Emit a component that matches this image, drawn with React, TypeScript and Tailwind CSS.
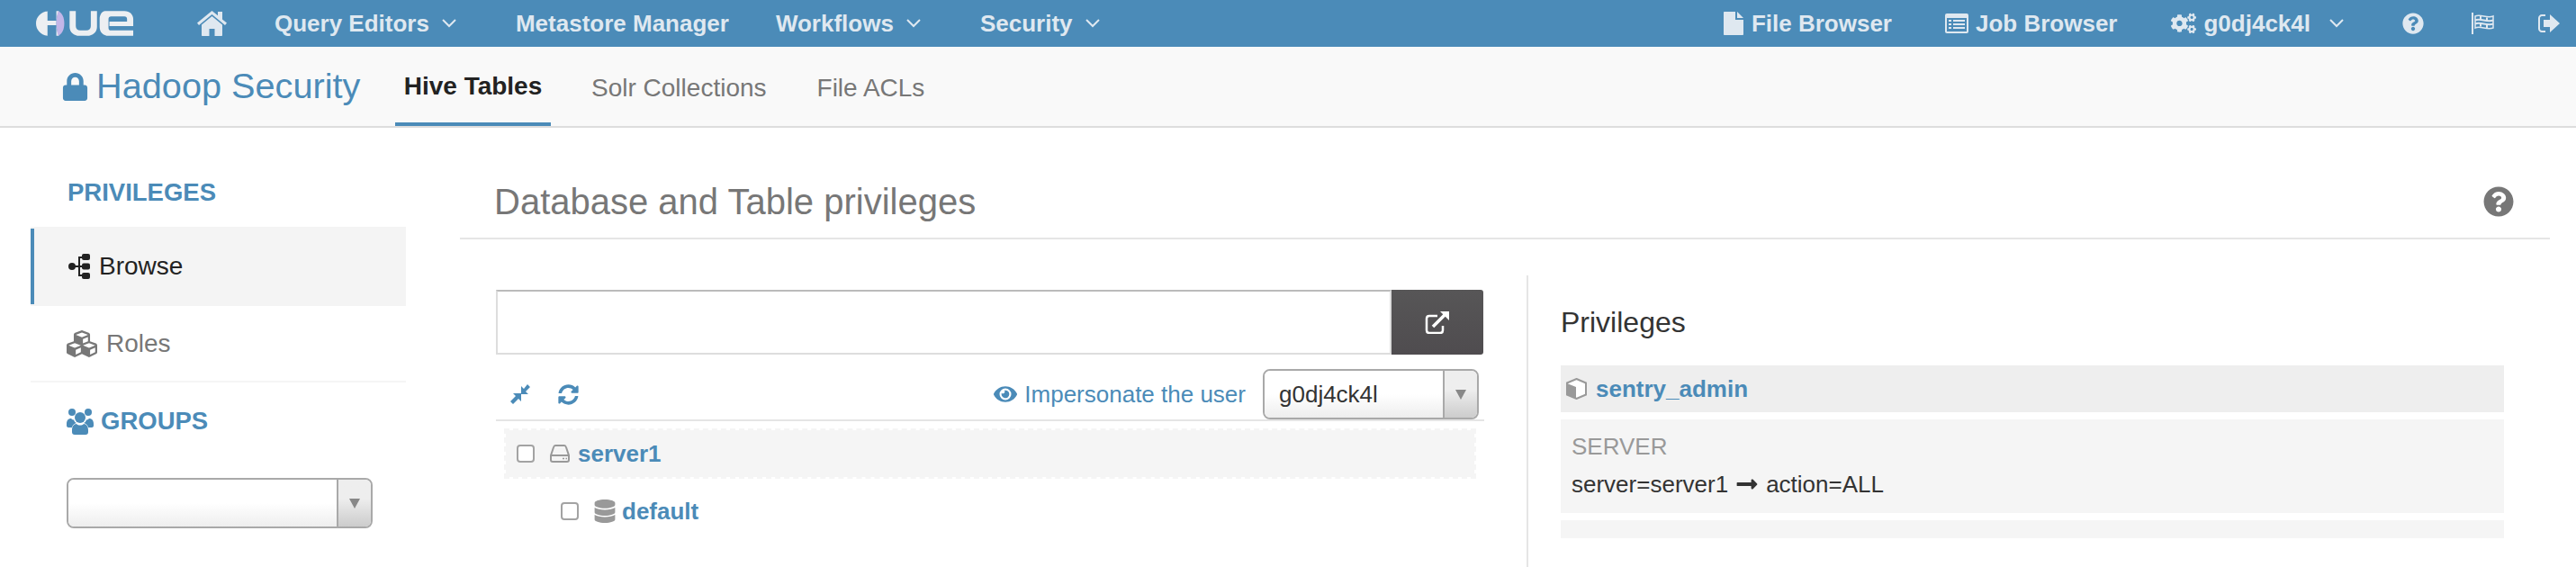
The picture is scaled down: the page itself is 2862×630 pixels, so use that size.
import React from 'react';
import { FaLock, FaCogs, FaQuestionCircle, FaCubes, FaSyncAlt, FaEye, FaDatabase, FaLongArrowAltRight } from 'react-icons/fa';

const blue = 'text-[#4b8bb8]';

const Chevron = ({ className = '' }: { className?: string }) => (
  <svg width="16" height="10" viewBox="0 0 16 10" className={className} fill="none" stroke="currentColor" strokeWidth="2">
    <path d="M1 1l7 7 7-7" />
  </svg>
);

const HueLogo = () => (
  <svg width="110" height="28" viewBox="0 0 112 28" className="mr-[69px]">
    <path d="M14 0C5 1 0 7 0 14s5 13 13 14V16h10v12h3c-2-4-3-9-3-14s1-10 3-14h-3v11H13V0z" fill="#eceff2" />
    <path d="M25 0c5 2 7 8 7 14s-2 12-7 14c-1-4-2-9-2-14s1-10 2-14z" fill="#c3b6e8" />
    <path d="M38 0h7v17c0 3 2 5 5 5h7c3 0 5-2 5-5V0h7v18c0 6-5 10-11 10h-9c-6 0-11-4-11-10z" fill="#eceff2" />
    <path d="M78 0h22c6 0 10 4 10 9v8H83v-5h20V9c0-2-1-3-3-3H85c-2 0-3 1-3 3v10c0 2 1 3 3 3h25v6H82c-6 0-10-4-10-10V9c0-5 3-9 6-9z" fill="#eceff2" />
  </svg>
);

const HomeIcon = () => (
  <svg width="33" height="28" viewBox="0 0 33 28" className="mr-[53px]" fill="#dfe8f0">
    <path d="M16.5 6L5 15.5V27c0 .6.4 1 1 1h7.5v-8h6v8H27c.6 0 1-.4 1-1V15.5z" />
    <path d="M16.5 0L0 13.5l2 2.4L16.5 4 31 15.9l2-2.4-5-4.1V1h-5v4.3z" />
  </svg>
);

const NavItem = ({ label, caret, className = '' }: { label: string; caret?: boolean; className?: string }) => (
  <span className={`flex items-center font-bold ${className}`}>
    {label}
    {caret && <Chevron className="ml-[14px]" />}
  </span>
);

const FileIcon = () => (
  <svg width="23" height="26" viewBox="0 0 23 26" className="mr-[8px]" fill="#dfe8f0">
    <path d="M1 0h12v9h9v16c0 .6-.4 1-1 1H1c-.6 0-1-.4-1-1V1c0-.6.4-1 1-1z" />
    <path d="M15 0l7 7h-7z" />
  </svg>
);

const JobIcon = () => (
  <svg width="26" height="22" viewBox="0 0 26 22" className="mr-[8px]">
    <rect width="26" height="22" rx="2" fill="#dfe8f0" />
    <path d="M2 5h22v15H2z" fill="#4b8bb8" />
    <path d="M4 7h3v2H4zM9 7h13v2H9zM4 11h3v2H4zM9 11h13v2H9zM4 15h3v2H4zM9 15h13v2H9z" fill="#dfe8f0" />
  </svg>
);

const FlagIcon = () => (
  <svg width="26" height="24" viewBox="0 0 26 24" className="mr-[49px]" fill="none" stroke="#dfe8f0">
    <path d="M2 0v24" strokeWidth="2" />
    <path d="M5 4c6-3 13 3 20 0v13c-7 3-14-3-20 0z" strokeWidth="1.500" />
    <path d="M5 8.500c6-3 13 3 20 0" strokeWidth="2" />
    <path d="M5 12.500c6-3 13 3 20 0" strokeWidth="2" />
    <path d="M11 3.500v13M18 5.500v13" strokeWidth="2" strokeDasharray="4 4" />
  </svg>
);

const SignOutIcon = () => (
  <svg width="24" height="20" viewBox="0 0 24 20" fill="#dfe8f0">
    <path d="M8 0H4C2 0 0 2 0 4v12c0 2 2 4 4 4h4v-2H4c-1 0-2-1-2-2V4c0-1 1-2 2-2h4z" />
    <path d="M6 6h7V0l11 10-11 10v-6H6z" />
  </svg>
);

const SitemapIcon = () => (
  <svg width="24" height="28" viewBox="0 0 24 28" className="mr-[10px]" fill="#222">
    <circle cx="4" cy="14" r="4" />
    <path d="M6 13h5V3h4v2h-2v8h2v2h-2v8h2v2h-4V15H6z" />
    <rect x="15" y="0" width="9" height="7" rx="2" />
    <rect x="15" y="10.500" width="9" height="7" rx="2" />
    <rect x="15" y="21" width="9" height="7" rx="2" />
  </svg>
);

const UsersIcon = () => (
  <svg width="30" height="29" viewBox="0 0 30 29" className="mr-[8px]" fill="#4b8bb8">
    <circle cx="6" cy="4" r="4" />
    <circle cx="24" cy="4" r="4" />
    <circle cx="15" cy="10" r="6" />
    <path d="M0 17c0-4 2-6 5-6 1 1 2 1.500 3 1.500.5 1.500 1.500 3 3 3.500-3 1-4.500 2.500-5 5H2c-1 0-2-1-2-2zM30 17c0-4-2-6-5-6-1 1-2 1.500-3 1.500-.5 1.500-1.500 3-3 3.500 3 1 4.500 2.500 5 5h4c1 0 2-1 2-2z" />
    <path d="M6 24c0-4 2-7 5-7 1 1 2.500 1.500 4 1.500s3-.5 4-1.500c3 0 5 3 5 7v2c0 2-1 3-3 3H9c-2 0-3-1-3-3z" />
  </svg>
);

const CompressIcon = () => (
  <svg width="22" height="22" viewBox="0 0 22 22" className="mr-[31px]" fill="#4b8bb8">
    <path d="M3 22l-3-3 6-6-3-3h9v9l-3-3z" />
    <path d="M19 0l3 3-5 5 3 3h-8V2l3 3z" />
  </svg>
);

const ExternalIcon = () => (
  <svg width="28" height="26" viewBox="0 0 28 26" fill="none" stroke="#fff" strokeWidth="2.500">
    <path d="M14 6H5C3 6 2 7 2 9v13c0 2 1 3 3 3h12c2 0 3-1 3-3v-5" />
    <path d="M9 18L24 3" strokeWidth="3.500" />
    <path d="M17 1h10v10z" fill="#fff" stroke="none" />
  </svg>
);

const HddIcon = () => (
  <svg width="22" height="20" viewBox="0 0 22 20" className="ml-[17px] mr-[9px]" fill="none" stroke="#999" strokeWidth="2">
    <path d="M1 12L4 3c.4-1.300 1-2 2-2h10c1 0 1.600.7 2 2l3 9v5c0 1-1 2-2 2H3c-1 0-2-1-2-2zM1 12h20" />
    <path d="M14 15.500h2M17.500 15.500h1.500" strokeWidth="1.500" />
  </svg>
);

const CubeIcon = () => (
  <svg width="25" height="24" viewBox="0 0 25 24" className="mr-[9px]">
    <path d="M12.500 1L23 5.500v13L12.500 23 2 18.500v-13z" fill="#fff" stroke="#999" strokeWidth="2" />
    <path d="M2 6l10 4v13L2 18.500z" fill="#999" />
  </svg>
);

const SelectBox = ({ value, className }: { value?: string; className: string }) => (
  <div className={`flex border-2 border-[#a9a9a9] rounded-[8px] overflow-hidden ${className}`}>
    <div className="flex-1 flex items-center pl-[16px] text-[26px] text-[#333] bg-gradient-to-b from-white from-50% to-[#eeeeee]">{value}</div>
    <div className="w-[38px] border-l-2 border-[#a9a9a9] flex items-center justify-center bg-gradient-to-b from-[#eeeeee] from-40% to-[#cccccc]">
      <span className="w-0 h-0 border-l-[6px] border-r-[6px] border-t-[11px] border-l-transparent border-r-transparent border-t-[#888]" />
    </div>
  </div>
);

const Check = () => <span className="w-[20px] h-[20px] border-2 border-[#a3a3a3] rounded-[4px] bg-white shrink-0" />;

export default function App() {
  return (
    <div className="w-[2862px] h-[630px] overflow-hidden bg-white font-['Liberation_Sans',Arial,sans-serif] text-[#333]">
      {/* top bar */}
      <div className="h-[52px] bg-[#4b8bb8] text-[#dfe8f0] text-[26px] flex items-center justify-between pl-[40px]">
        <div className="flex items-center">
          <HueLogo />
          <HomeIcon />
          <NavItem label="Query Editors" caret />
          <NavItem label="Metastore Manager" className="ml-[66px]" />
          <NavItem label="Workflows" caret className="ml-[52px]" />
          <NavItem label="Security" caret className="ml-[66px]" />
        </div>
        <div className="flex items-center pr-[18px]">
          <span className="flex items-center font-bold mr-[59px]"><FileIcon />File Browser</span>
          <span className="flex items-center font-bold mr-[60px]"><JobIcon />Job Browser</span>
          <span className="flex items-center font-bold mr-[65px]"><FaCogs size={28} className="mr-[8px]" />g0dj4ck4l<Chevron className="ml-[21px]" /></span>
          <FaQuestionCircle size={24} className="mr-[52px]" />
          <FlagIcon />
          <SignOutIcon />
        </div>
      </div>

      {/* sub nav */}
      <div className="h-[90px] bg-[#f9f9f9] border-b-2 border-[#dddddd] flex items-stretch pl-[68px]">
        <div className={`flex items-center w-[371px] text-[39.7px] ${blue}`}>
          <FaLock size={31} className="mr-[8px]" />
          Hadoop Security
        </div>
        <div className="flex items-stretch text-[28px] text-[#777]">
          <div className="w-[173px] pt-[3px] flex items-center justify-center font-bold text-[#222] border-b-4 border-[#4b8bb8]">Hive Tables</div>
          <div className="ml-[45px] mr-[56px] pt-[3px] flex items-center">Solr Collections</div>
          <div className="pt-[3px] flex items-center">File ACLs</div>
        </div>
      </div>

      <div className="flex pl-[34px] pr-[29px]">
        {/* sidebar */}
        <div className="w-[417px] shrink-0 pt-[56px] mr-[60px]">
          <div className={`pl-[41px] text-[27.5px] leading-[32px] font-bold ${blue}`}>PRIVILEGES</div>
          <div className="mt-[22px] h-[88px] bg-[#f4f4f4] flex items-center pl-[42px] text-[28px] text-[#222] relative">
            <span className="absolute left-0 top-[2px] bottom-[2px] w-[4px] bg-[#4b8bb8]" />
            <SitemapIcon />
            Browse
          </div>
          <div className="h-[85px] border-b-2 border-[#f5f5f5] flex items-center pl-[40px] text-[28px] text-[#777]">
            <FaCubes size={34} className="mr-[10px]" />
            Roles
          </div>
          <div className={`mt-[27px] pl-[40px] flex items-center text-[27.5px] leading-[32px] font-bold ${blue}`}>
            <UsersIcon />
            GROUPS
          </div>
          <SelectBox className="ml-[40px] mt-[47px] w-[340px] h-[56px]" />
        </div>

        {/* main */}
        <div className="flex-1 min-w-0 pt-[58px]">
          <div className="h-[66px] border-b-2 border-[#e5e5e5] flex items-start justify-between pl-[38px] pr-[40px]">
            <span className="text-[40px] leading-[48px] text-[#777]">Database and Table privileges</span>
            <FaQuestionCircle size={34} className="text-[#777] mt-[7px]" />
          </div>

          <div className="flex">
            {/* tree */}
            <div className="w-[1098px] ml-[40px] pt-[56px]">
              <div className="flex h-[72px]">
                <div className="flex-1 border-2 border-[#dddddd] border-t-[#bbbbbb] bg-white" />
                <div className="w-[102px] mr-[1px] flex items-center justify-center rounded-r-[3px] bg-gradient-to-b from-[#575657] to-[#4f4c4f]"><ExternalIcon /></div>
              </div>
              <div className="h-[58px] mt-[16px] border-b-2 border-[#e5e5e5] flex items-center pl-[16px] pr-[6px]">
                <CompressIcon />
                <FaSyncAlt size={23} className={blue} />
                <span className={`ml-auto flex items-center text-[26px] ${blue}`}>
                  <FaEye size={26} className="mr-[8px]" />
                  Impersonate the user
                </span>
                <SelectBox value="g0dj4ck4l" className="ml-[19px] w-[240px] h-[56px]" />
              </div>
              <div className="mt-[8px] mx-[9px] h-[56px] bg-[#f5f5f5] bg-clip-padding border-2 border-dashed border-[#f5f5f5] flex items-center pl-[12px] text-[26px] font-bold">
                <Check />
                <HddIcon />
                <span className={blue}>server1</span>
              </div>
              <div className="mt-[20px] h-[32px] flex items-center pl-[72px] text-[26px] font-bold">
                <Check />
                <FaDatabase size={26} className="text-[#999] ml-[16px] mr-[6px]" />
                <span className={blue}>default</span>
              </div>
            </div>

            {/* privileges */}
            <div className="ml-[47px] mt-[40px] h-[330px] border-l-2 border-[#e5e5e5] pl-[36px] flex-1">
              <div className="text-[32px] leading-[36px] text-[#333] mt-[34px]">Privileges</div>
              <div className="mt-[30px] w-[1048px] h-[52px] bg-[#eeeeee] flex items-center pl-[5px] text-[26px] font-bold">
                <CubeIcon />
                <span className={blue}>sentry_admin</span>
              </div>
              <div className="mt-[8px] w-[1048px] h-[104px] bg-[#f5f5f5] pl-[12px] pt-[12px] text-[26px] leading-[36px]">
                <div className="text-[#999]">SERVER</div>
                <div className="mt-[6px] flex items-center text-[#333]">server=server1<FaLongArrowAltRight size={26} className="mx-[8px]" />action=ALL</div>
              </div>
              <div className="mt-[8px] w-[1048px] h-[20px] bg-[#f5f5f5]" />
            </div>
          </div>
        </div>
      </div>
    </div>
  );
}
